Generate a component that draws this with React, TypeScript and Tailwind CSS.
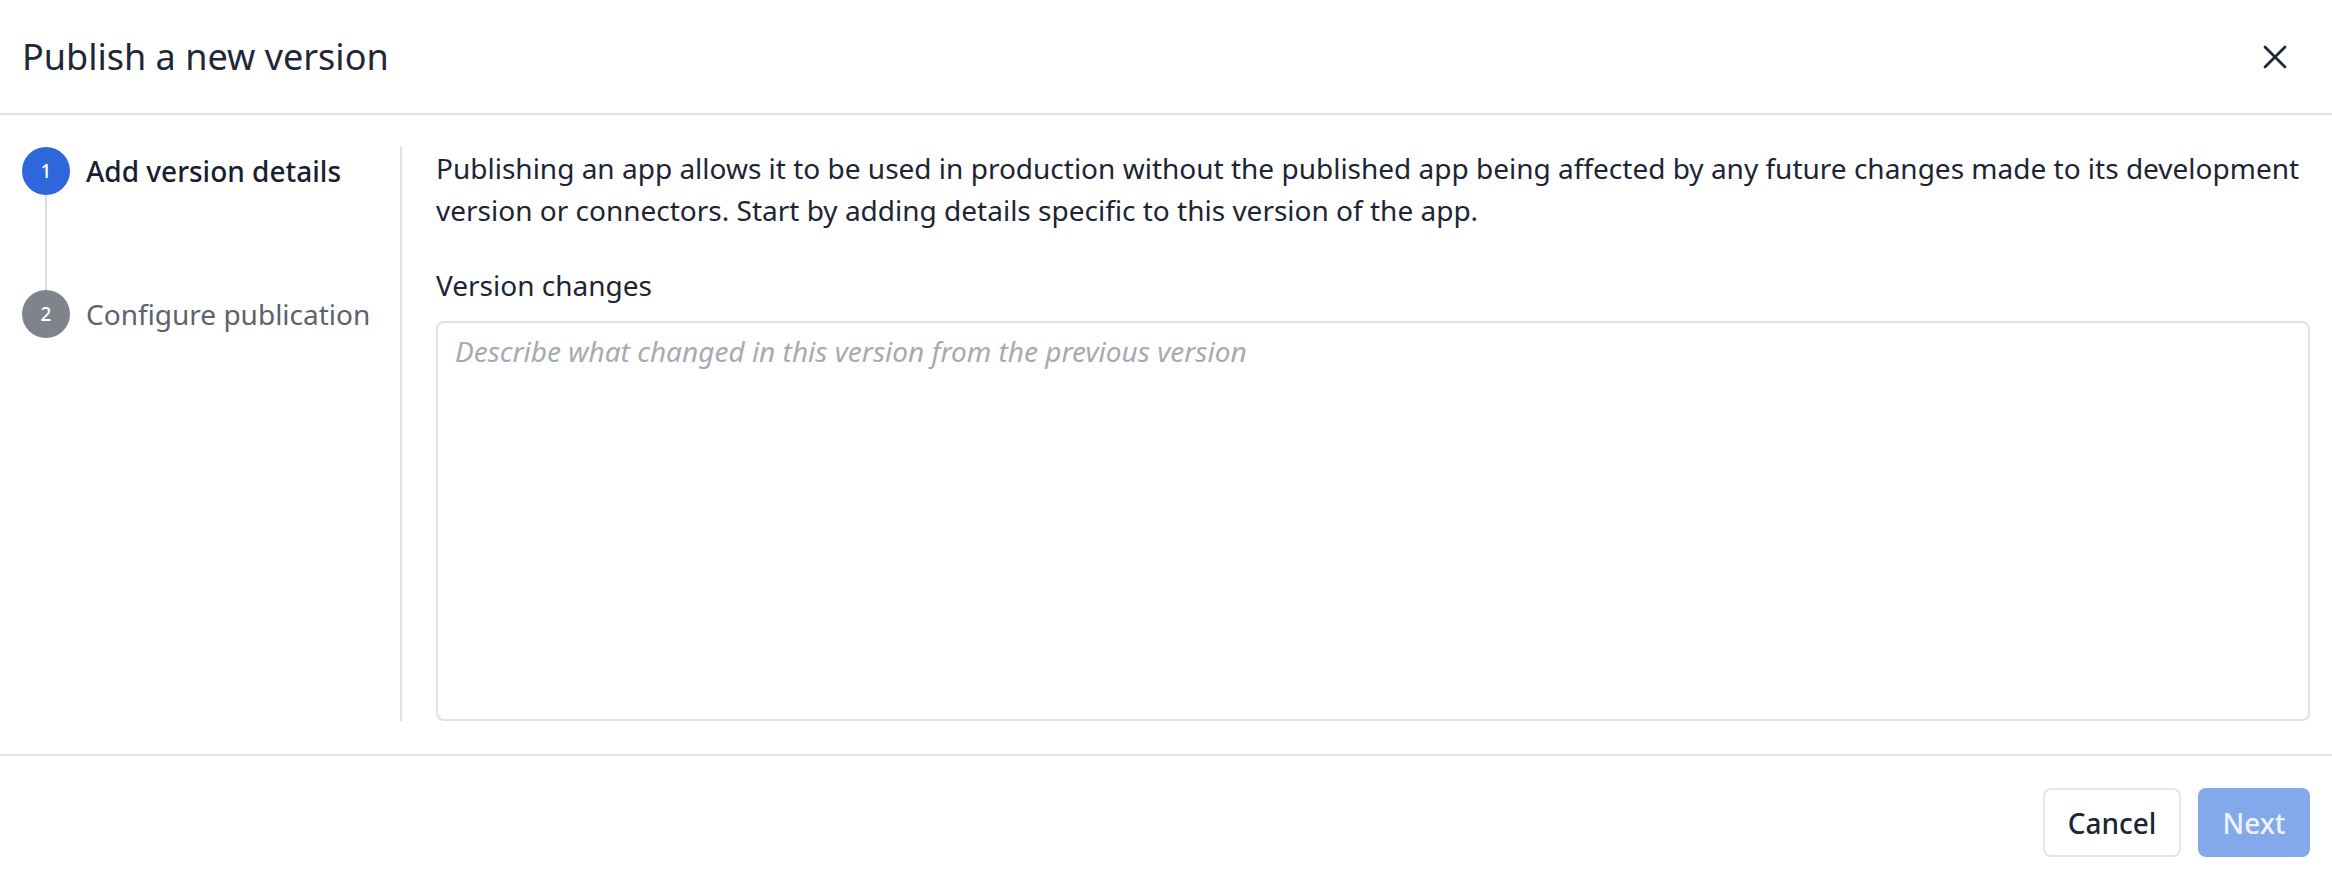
import { useState } from "react";

const steps = [
    { n: 1, label: "Add version details", active: true },
    { n: 2, label: "Configure publication", active: false },
];

function Stepper() {
    return (
        <div className="w-[380px] shrink-0 border-r-2 border-[#e0e0e7]">
            {steps.map((step, i) => (
                <div key={step.n}>
                    <div className="flex items-center">
                        <span
                            className={`flex h-[48px] w-[48px] items-center justify-center rounded-full text-[19px] font-medium text-white ${
                                step.active ? "bg-[#2f66dc]" : "bg-[#7e838c]"
                            }`}
                        >
                            {step.n}
                        </span>
                        <span
                            className={`ml-[16px] text-[28px] leading-[42px] ${
                                step.active ? "font-medium text-[#172032]" : "text-[#5c6370]"
                            }`}
                        >
                            {step.label}
                        </span>
                    </div>
                    {/* connector between steps */}
                    {i < steps.length - 1 && <div className="ml-[23px] h-[95px] w-[2px] bg-[#dadade]" />}
                </div>
            ))}
        </div>
    );
}

export default function App() {
    const [changes, setChanges] = useState("");

    return (
        <div
            className="flex h-[884px] w-full flex-col bg-white text-[#1d2535]"
            style={{ fontFamily: '"Noto Sans", "Open Sans", sans-serif' }}
        >
            <header className="flex h-[115px] shrink-0 items-center justify-between border-b-2 border-[#e2e2e9] pl-[22px] pr-[45px]">
                <h1 className="text-[36px] font-normal leading-none text-[#1e2839]">Publish a new version</h1>
                <button aria-label="Close" className="flex h-[24px] w-[24px] items-center justify-center">
                    <svg width="24" height="24" viewBox="0 0 24 24" fill="none">
                        <path d="M2 2L22 22M22 2L2 22" stroke="#1e2839" strokeWidth="2.8" strokeLinecap="round" />
                    </svg>
                </button>
            </header>

            <main className="flex min-h-0 flex-1 px-[22px] pb-[33px] pt-[32px]">
                <Stepper />
                <section className="flex min-w-0 flex-1 flex-col pl-[34px]">
                    <p className="text-[28px] leading-[42px]">
                        Publishing an app allows it to be used in production without the published app being affected by any
                        future changes made to its development version or connectors. Start by adding details specific to
                        this version of the app.
                    </p>
                    <label className="mt-[33px] text-[28px] leading-[42px]">Version changes</label>
                    <textarea
                        value={changes}
                        onChange={(e) => setChanges(e.target.value)}
                        placeholder="Describe what changed in this version from the previous version"
                        className="mt-[15px] w-full flex-1 resize-none rounded-[8px] border-2 border-[#e1e1e7] px-[17px] pb-[10px] pt-[7px] text-[28px] leading-[42px] outline-none placeholder:italic placeholder:text-[#a5aab3]"
                    />
                </section>
            </main>

            <footer className="flex h-[130px] shrink-0 items-start justify-end gap-[17px] border-t-2 border-[#e2e2e9] px-[22px] pt-[32px]">
                <button className="h-[69px] w-[138px] rounded-[8px] border-2 border-[#e6e6ea] bg-white text-[28px] font-medium text-[#1d2535]">
                    Cancel
                </button>
                <button
                    disabled
                    className="h-[69px] w-[112px] rounded-[8px] bg-[#84a9ea] text-[28px] font-medium text-[#eef3fd]"
                >
                    Next
                </button>
            </footer>
        </div>
    );
}
